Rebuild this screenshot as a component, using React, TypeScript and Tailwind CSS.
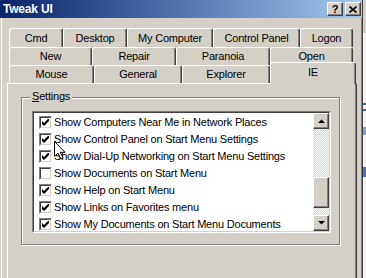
import type { ReactNode } from 'react'

type TabDef = { label: string; w: string }

const ROW1: TabDef[] = [
  { label: 'Cmd', w: 'w-[54px]' },
  { label: 'Desktop', w: 'w-[64px]' },
  { label: 'My Computer', w: 'w-[86px]' },
  { label: 'Control Panel', w: 'w-[87px]' },
  { label: 'Logon', w: 'w-[53px]' },
]

const ROW2: TabDef[] = [
  { label: 'New', w: 'w-[83px]' },
  { label: 'Repair', w: 'w-[84px]' },
  { label: 'Paranoia', w: 'w-[94px]' },
  { label: 'Open', w: 'w-[83px]' },
]

const ROW3: TabDef[] = [
  { label: 'Mouse', w: 'w-[85px]' },
  { label: 'General', w: 'w-[88px]' },
  { label: 'Explorer', w: 'w-[88px]' },
]

const ITEMS: { label: string; checked: boolean }[] = [
  { label: 'Show Computers Near Me in Network Places', checked: true },
  { label: 'Show Control Panel on Start Menu Settings', checked: true },
  { label: 'Show Dial-Up Networking on Start Menu Settings', checked: true },
  { label: 'Show Documents on Start Menu', checked: false },
  { label: 'Show Help on Start Menu', checked: true },
  { label: 'Show Links on Favorites menu', checked: true },
  { label: 'Show My Documents on Start Menu Documents', checked: true },
]

// raised 3d edge used by caption buttons, scroll buttons and the thumb
function Raised({ className, children }: { className: string; children?: ReactNode }) {
  return (
    <div
      className={`flex items-center justify-center border border-t-white border-l-white border-r-[#404040] border-b-[#404040] bg-[#d4d0c8] shadow-[inset_-1px_-1px_0_#808080] ${className}`}
    >
      {children}
    </div>
  )
}

function Tab({ label, w }: TabDef) {
  return (
    <div
      className={`flex h-full items-center justify-center rounded-t-[3px] border-t border-l border-r border-t-white border-l-white border-r-[#404040] shadow-[inset_-1px_0_0_#808080] ${w}`}
    >
      {label}
    </div>
  )
}

function Check() {
  return (
    <svg width="7" height="7" viewBox="0 0 7 7">
      <polygon points="0,2 2,4 7,-1 7,2 2,7 0,5" fill="#000" />
    </svg>
  )
}

function Checkbox({ checked }: { checked: boolean }) {
  return (
    <div className="h-[13px] w-[13px] shrink-0 border border-t-[#808080] border-l-[#808080] border-r-white border-b-white">
      <div className="flex h-full w-full items-center justify-center border border-t-[#404040] border-l-[#404040] border-r-[#d4d0c8] border-b-[#d4d0c8] bg-white">
        {checked && <Check />}
      </div>
    </div>
  )
}

function Arrow({ down }: { down?: boolean }) {
  return (
    <svg width="7" height="4" viewBox="0 0 7 4">
      <polygon points={down ? '0,0 7,0 3.5,3.6' : '0,4 7,4 3.5,0.4'} fill="#000" />
    </svg>
  )
}

function Scrollbar() {
  return (
    <div className="flex w-[16px] shrink-0 flex-col">
      <Raised className="h-[16px] w-[16px]">
        <Arrow />
      </Raised>
      <div className="flex-1 bg-[repeating-conic-gradient(#d4d0c8_0_25%,#ffffff_0_50%)] bg-[length:2px_2px]">
        <Raised className="mt-[48px] h-[31px] w-[16px]" />
      </div>
      <Raised className="h-[16px] w-[16px]">
        <Arrow down />
      </Raised>
    </div>
  )
}

function Cursor() {
  return (
    <svg
      className="absolute left-[54px] top-[141px]"
      width="12"
      height="19"
      viewBox="0 0 12 19"
    >
      <path
        d="M0.5 0.5 V15.5 L4 12 L6.8 18 L9 17 L6.3 11.3 H11 Z"
        fill="#fff"
        stroke="#000"
        strokeWidth="1"
      />
    </svg>
  )
}

export default function App() {
  return (
    <div className="relative flex h-[278px] w-[366px] overflow-hidden bg-[#d4d0c8] font-['Liberation_Sans',Arial,sans-serif] text-[11px] tracking-[-0.2px] text-black">
      <div className="flex w-[363px] shrink-0 flex-col border-r border-[#404040]">
        {/* caption */}
        <div className="flex h-[18px] shrink-0 items-center bg-linear-to-r from-[#0a246a] to-[#a6caf0] pl-[3px] pr-[1px]">
          <span className="text-[12px] font-bold text-white">Tweak UI</span>
          <div className="ml-auto flex gap-[2px]">
            <Raised className="h-[14px] w-[16px] text-[11px] font-bold leading-none">?</Raised>
            <Raised className="h-[14px] w-[16px]">
              <svg width="8" height="7" viewBox="0 0 8 7">
                <path d="M0.5 0.5 L7.5 6.5 M7.5 0.5 L0.5 6.5" stroke="#000" strokeWidth="1.6" />
              </svg>
            </Raised>
          </div>
        </div>

        <div className="ml-px flex flex-1 flex-col border-l border-r border-l-white border-r-[#808080] pl-[5px] pt-[10px]">
          {/* tab rows */}
          <div className="ml-[2px] flex flex-col">
            <div className="flex h-[19px]">
              {ROW1.map((t) => (
                <Tab key={t.label} {...t} />
              ))}
            </div>
            <div className="flex h-[18px]">
              {ROW2.map((t) => (
                <Tab key={t.label} {...t} />
              ))}
            </div>
            <div className="flex h-[18px] items-end">
              {ROW3.map((t) => (
                <Tab key={t.label} {...t} />
              ))}
              <div className="relative z-10 -mb-px flex h-[22px] w-[86px] items-center justify-center rounded-t-[3px] border-t border-l border-r border-t-white border-l-white border-r-[#404040] bg-[#d4d0c8] pb-[2px] shadow-[inset_-1px_0_0_#808080]">
                IE
              </div>
            </div>
          </div>

          {/* page */}
          <div className="w-[350px] flex-1 border-t border-l border-r border-t-white border-l-white border-r-[#404040] shadow-[inset_-1px_0_0_#808080]">
            <div className="relative ml-[13px] mt-[13px] h-[148px] w-[319px] border border-[#808080] shadow-[1px_1px_0_#ffffff,inset_1px_1px_0_#ffffff]">
              <span className="absolute -top-[8px] left-[8px] bg-[#d4d0c8] px-[2px] leading-[13px]">
                <span className="underline">S</span>ettings
              </span>
              <div className="ml-[10px] mt-[13px] h-[122px] w-[299px] border border-t-[#808080] border-l-[#808080] border-r-white border-b-white">
                <div className="flex h-full w-full border border-t-[#404040] border-l-[#404040] border-r-[#d4d0c8] border-b-[#d4d0c8]">
                  <div className="flex-1 overflow-hidden bg-white pt-px">
                    {ITEMS.map((it) => (
                      <div key={it.label} className="flex h-[17px] items-center gap-[2px] pl-[5px]">
                        <Checkbox checked={it.checked} />
                        <span className="whitespace-nowrap leading-none">{it.label}</span>
                      </div>
                    ))}
                  </div>
                  <Scrollbar />
                </div>
              </div>
            </div>
          </div>
        </div>
      </div>

      {/* edge of whatever lies behind the dialog */}
      <div className="flex flex-1 flex-col">
        <div className="h-[33px] bg-[#d4d0c8]" />
        <div className="flex flex-1 flex-col bg-[#f4f4f4]">
          <div className="mt-[70px] h-[2px] bg-[#3a5fbf]" />
          <div className="mt-[4px] h-[2px] bg-[#3a5fbf]" />
          <div className="mt-[16px] h-[8px] bg-[#7f9fd8]" />
          <div className="mt-[32px] h-[10px] bg-[#4a6fc4]" />
        </div>
      </div>

      <Cursor />
    </div>
  )
}
